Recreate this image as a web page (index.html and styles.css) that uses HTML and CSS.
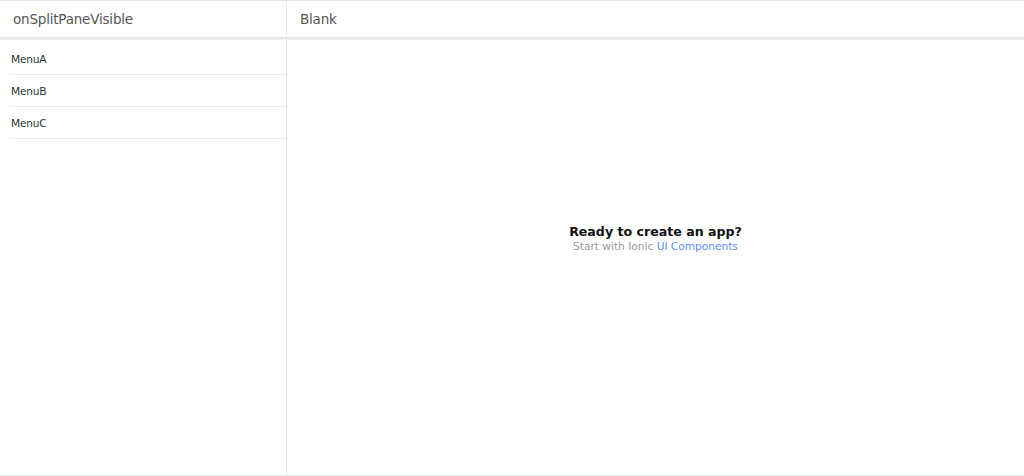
FILE: index.html
```html
<!DOCTYPE html>
<html>
<head>
<meta charset="utf-8">
<link rel="stylesheet" href="styles.css">
</head>
<body>
<div class="app">
  <aside class="menu">
    <header class="toolbar"><span class="title">onSplitPaneVisible</span></header>
    <ul class="list">
      <li class="item">MenuA</li>
      <li class="item">MenuB</li>
      <li class="item">MenuC</li>
    </ul>
  </aside>
  <main class="main">
    <header class="toolbar"><span class="title">Blank</span></header>
    <section class="content">
      <div class="welcome">
        <strong class="headline">Ready to create an app?</strong>
        <p class="sub">Start with Ionic <a class="link" href="#">UI Components</a></p>
      </div>
    </section>
  </main>
</div>
</body>
</html>
```
FILE: styles.css
```css
* { box-sizing: border-box; }
html, body { margin: 0; padding: 0; height: 100%; }
body {
  font-family: "DejaVu Sans", Verdana, sans-serif;
  background: #fff;
  color: #222;
}
.app {
  display: flex;
  height: 476px;
  border-top: 1px solid #e6e6e6;
  border-bottom: 1px solid #e4e6ee;
}
.menu {
  width: 287px;
  border-right: 1px solid #e6e6e6;
  display: flex;
  flex-direction: column;
}
.main {
  flex: 1;
  display: flex;
  flex-direction: column;
}
.toolbar {
  height: 37px;
  display: flex;
  align-items: center;
  padding-left: 13px;
  border-bottom: 1px solid #e2e2e2;
  box-shadow: 0 1px 1px #ececec, 0 2px 1px #f4f4f4;
  position: relative;
  z-index: 1;
}
.title {
  font-size: 13.5px;
  color: #555;
  letter-spacing: -0.2px;
}
.list {
  list-style: none;
  margin: 0;
  padding: 5px 0 0 10px;
}
.item {
  height: 32px;
  display: flex;
  align-items: center;
  padding-left: 1px;
  font-size: 10.6px;
  color: #333;
  border-bottom: 1px solid #ebebeb;
  letter-spacing: -0.2px;
}
.content {
  flex: 1;
  display: flex;
  align-items: center;
  justify-content: center;
  padding-bottom: 38px;
}
.welcome {
  text-align: center;
}
.headline {
  display: block;
  font-size: 12.6px;
  font-weight: bold;
  color: #111;
}
.sub {
  margin: 1px 0 0;
  font-size: 10.6px;
  color: #999;
}
.link {
  color: #5a8ff5;
  text-decoration: none;
}
```
